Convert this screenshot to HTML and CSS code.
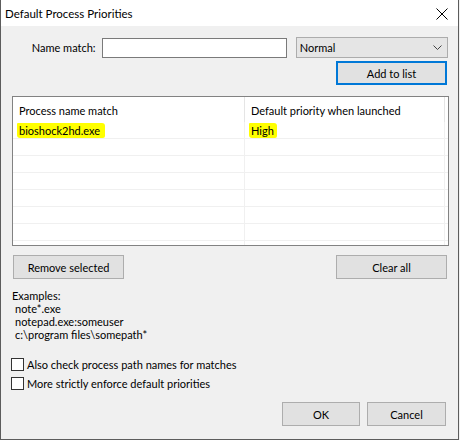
FILE: index.html
```html
<!DOCTYPE html>
<html>
<head>
<meta charset="utf-8">
<link rel="stylesheet" href="styles.css">
</head>
<body>
<div class="window">
  <div class="titlebar">
    <span class="title">Default Process Priorities</span>
    <svg class="close" width="12" height="12" viewBox="0 0 12 12"><path d="M0.5 0.5 L11.5 11.5 M11.5 0.5 L0.5 11.5" stroke="#000" stroke-width="1" fill="none"/></svg>
  </div>
  <div class="content">
    <div class="row-name">
      <label class="name-label">Name match:</label>
      <div class="text-input"></div>
      <div class="select">
        <span>Normal</span>
        <svg class="chev" width="9" height="5" viewBox="0 0 9 5"><path d="M0.5 0.5 L4.5 4.5 L8.5 0.5" stroke="#444" stroke-width="1" fill="none"/></svg>
      </div>
    </div>
    <div class="row-add">
      <div class="btn btn-default add">Add to list</div>
    </div>
    <div class="list">
      <div class="list-head">
        <div class="col c1">Process name match</div>
        <div class="col c2">Default priority when launched</div>
      </div>
      <div class="list-row">
        <div class="col c1"><span class="hl hl1">bioshock2hd.exe</span></div>
        <div class="col c2"><span class="hl hl2">High</span></div>
      </div>
      <div class="list-row"><div class="col c1"></div><div class="col c2"></div></div>
      <div class="list-row"><div class="col c1"></div><div class="col c2"></div></div>
      <div class="list-row"><div class="col c1"></div><div class="col c2"></div></div>
      <div class="list-row"><div class="col c1"></div><div class="col c2"></div></div>
      <div class="list-row"><div class="col c1"></div><div class="col c2"></div></div>
      <div class="list-row"><div class="col c1"></div><div class="col c2"></div></div>
      <div class="list-row"><div class="col c1"></div><div class="col c2"></div></div>
    </div>
    <div class="row-list-btns">
      <div class="btn wide">Remove selected</div>
      <div class="btn wide">Clear all</div>
    </div>
    <div class="examples">
      <div>Examples:</div>
      <div class="ex">note*.exe</div>
      <div class="ex">notepad.exe:someuser</div>
      <div class="ex">c:\program files\somepath*</div>
    </div>
    <div class="checks">
      <div class="check"><span class="box"></span><span>Also check process path names for matches</span></div>
      <div class="check"><span class="box"></span><span>More strictly enforce default priorities</span></div>
    </div>
    <div class="row-dialog">
      <div class="btn ok">OK</div>
      <div class="btn cancel">Cancel</div>
    </div>
  </div>
</div>
</body>
</html>
```

FILE: styles.css
```css
* { box-sizing: border-box; }
html, body { margin: 0; padding: 0; background: #f0f0f0; }
body {
  font-family: Lato, "Noto Sans", sans-serif;
  font-size: 11px;
  color: #000;
}
.window {
  width: 459px;
  height: 440px;
  border-left: 1px solid #5c5c5c;
  border-right: 1px solid #5c5c5c;
  border-bottom: 1px solid #5c5c5c;
  background: #f0f0f0;
  display: flex;
  flex-direction: column;
}
.titlebar {
  height: 26px;
  background: #fff;
  display: flex;
  align-items: center;
  justify-content: space-between;
  padding: 0 10px 0 4px;
  flex: none;
}
.title { font-size: 11.5px; line-height: 16px; margin-top: 1px; }
.close { display: block; margin-top: 1px; }
.content {
  padding: 11px 10px 0 11px;
  display: flex;
  flex-direction: column;
}
.row-name {
  display: flex;
  align-items: center;
  height: 21px;
}
.name-label {
  width: 90px;
  text-align: right;
  padding-right: 6px;
  line-height: 15px;
}
.text-input {
  width: 186px;
  height: 20px;
  background: #fff;
  border: 1px solid #7a7a7a;
}
.select {
  margin-left: 9px;
  width: 153px;
  height: 21px;
  background: #e5e5e5;
  border: 1px solid #acacac;
  display: flex;
  align-items: center;
  justify-content: space-between;
  padding: 0 5px 0 3px;
}
.select span { line-height: 15px; }
.chev { display: block; }
.row-add {
  display: flex;
  justify-content: flex-end;
  margin-top: 3px;
  padding-right: 1px;
}
.btn {
  height: 24px;
  background: #e1e1e1;
  border: 1px solid #adadad;
  display: flex;
  align-items: center;
  justify-content: center;
  line-height: 15px;
}
.btn-default { border: 2px solid #0078d7; }
.add { width: 111px; }
.list {
  margin-top: 11px;
  width: 437px;
  height: 150px;
  border: 1px solid #828282;
  background: #fff;
  overflow: hidden;
}
.list-head {
  display: flex;
  height: 25px;
}
.list-head .col {
  display: flex;
  align-items: center;
  padding-left: 6px;
  padding-top: 2px;
}
.list-head .c1 { width: 232px; border-right: 1px solid #e5e5e5; }
.list-head .c2 { width: 200px; border-right: 1px solid #e5e5e5; }
.list-row {
  display: flex;
  height: 17px;
  border-bottom: 1px solid #f0f0f0;
}
.list-row .col { display: flex; align-items: center; padding-left: 4px; }
.list-row .c1 { width: 232px; border-right: 1px solid #f0f0f0; }
.list-row .c2 { width: 200px; border-right: 1px solid #f0f0f0; }
.hl {
  background: #ffff00;
  line-height: 15px;
  padding: 0 2px 0 2px;
  border-radius: 1px 3px 2px 3px;
}
.hl1 { padding-right: 5px; }
.hl2 { padding-right: 3px; }
.row-list-btns {
  display: flex;
  justify-content: space-between;
  margin-top: 9px;
  padding-left: 1px;
  padding-right: 1px;
}
.wide { width: 111px; }
.examples {
  margin-top: 10px;
  line-height: 13px;
}
.ex { padding-left: 3px; }
.checks {
  margin-top: 17px;
  display: flex;
  flex-direction: column;
  gap: 6px;
  margin-left: -1px;
}
.check { display: flex; align-items: center; height: 13px; }
.box {
  width: 13px;
  height: 13px;
  border: 1px solid #333;
  background: #fff;
  margin-right: 3px;
  flex: none;
}
.row-dialog {
  display: flex;
  justify-content: flex-end;
  gap: 7px;
  margin-top: 12px;
  padding-right: 2px;
}
.ok { width: 78px; }
.cancel { width: 79px; }
```
